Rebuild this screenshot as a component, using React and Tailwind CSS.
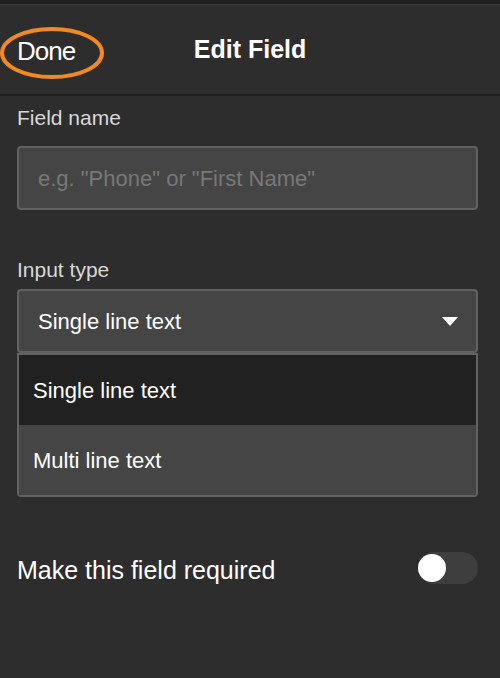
import React from "react";

const OPTIONS = ["Single line text", "Multi line text"];

export default function App() {
  const selected = OPTIONS[0];

  return (
    <div
      className="w-[500px] h-[678px] bg-[#2d2d2d] text-white overflow-hidden flex flex-col"
      style={{ fontFamily: '"Liberation Sans", Arial, sans-serif' }}
    >
      <div className="h-[5px] bg-[#202020] border-b border-[#3a3a3a] shrink-0"></div>

      <div className="relative h-[91px] shrink-0 grid grid-cols-[1fr_auto_1fr] items-center border-b-2 border-[#1f1f1f]">
        <button className="justify-self-start pl-[17px] pt-[3px] text-[26px] tracking-[-1px] text-white leading-none">
          Done
        </button>
        <h1 className="text-[25px] font-bold leading-none">Edit Field</h1>
        <div></div>
        <svg
          className="absolute left-0 top-[21px] pointer-events-none"
          width="110"
          height="56"
          viewBox="0 0 110 56"
        >
          <ellipse cx="52" cy="27" rx="50" ry="24" fill="none" stroke="#f18a22" strokeWidth="4" />
        </svg>
      </div>

      <div className="pl-[17px] pr-[22px] flex flex-col">
        <label className="mt-[10px] text-[21px] leading-[24px] text-[#d8d8d8]">Field name</label>
        <div className="mt-[16px] h-[64px] rounded-[4px] border-2 border-[#626262] bg-[#454545] flex items-center pl-[19px]">
          <span className="text-[22px] text-[#787878]">e.g. "Phone" or "First Name"</span>
        </div>

        <label className="mt-[48px] text-[21px] leading-[24px] text-[#d8d8d8]">Input type</label>
        <div className="mt-[7px] h-[64px] rounded-[4px] border-2 border-[#626262] bg-[#454545] flex items-center justify-between pl-[19px] pr-[18px]">
          <span className="text-[22px] text-white">{selected}</span>
          <svg width="16" height="9" viewBox="0 0 16 9">
            <path d="M0 0 L16 0 L8 9 Z" fill="#ffffff" />
          </svg>
        </div>

        <div className="h-[144px] rounded-b-[4px] border-2 border-[#626262] flex flex-col overflow-hidden">
          {OPTIONS.map((opt) => (
            <div
              key={opt}
              className={`h-[70px] flex items-center pl-[14px] text-[22px] text-white ${
                opt === selected ? "bg-[#212121]" : "bg-[#454545]"
              }`}
            >
              {opt}
            </div>
          ))}
        </div>

        <div className="mt-[53px] flex items-center justify-between">
          <span className="text-[25px] leading-[32px] pt-[4px] text-white">Make this field required</span>
          <div className="w-[60px] h-[32px] rounded-full bg-[#3e3e3e] flex items-center">
            <div className="w-[28px] h-[28px] rounded-full bg-white"></div>
          </div>
        </div>
      </div>
    </div>
  );
}
